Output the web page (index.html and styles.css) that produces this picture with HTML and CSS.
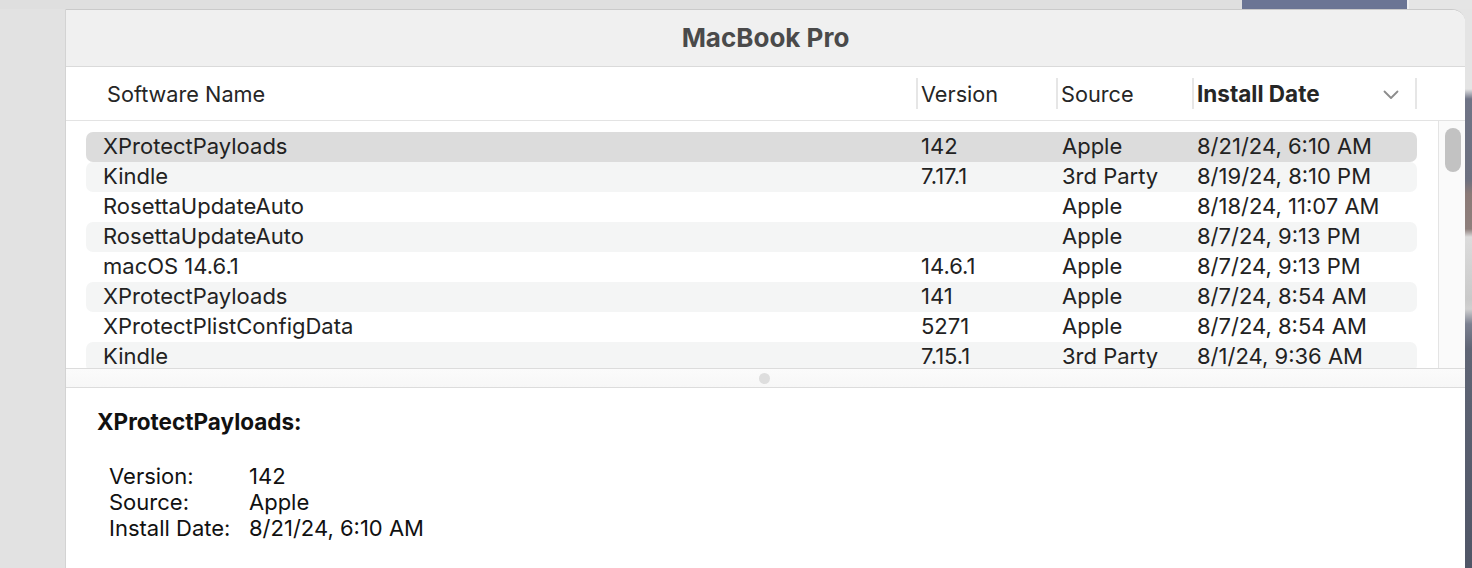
FILE: index.html
```html
<!DOCTYPE html>
<html>
<head>
<meta charset="utf-8">
<link rel="stylesheet" href="styles.css">
</head>
<body>
<div class="topstrip">
  <div class="ts-a"></div>
  <div class="ts-b"></div>
  <div class="ts-c"></div>
</div>
<div class="main">
  <div class="gutter"></div>
  <div class="window">
    <div class="titlebar">MacBook Pro</div>
    <div class="header">
      <div class="hcol hname">Software Name</div>
      <div class="hcol hsep">Version</div>
      <div class="hcol hsep">Source</div>
      <div class="hcol hsep hdate"><span class="bold">Install Date</span>
        <svg class="chev" width="16" height="10" viewBox="0 0 16 10"><polyline points="1.5,1.5 8,8 14.5,1.5" fill="none" stroke="#8c8c8c" stroke-width="1.8" stroke-linecap="round" stroke-linejoin="round"/></svg>
      </div>
      <div class="hcol hsep hlast"></div>
    </div>
    <div class="body">
      <div class="list">
        <div class="row sel"><span>XProtectPayloads</span><span>142</span><span>Apple</span><span>8/21/24, 6:10 AM</span></div>
        <div class="row alt"><span>Kindle</span><span>7.17.1</span><span>3rd Party</span><span>8/19/24, 8:10 PM</span></div>
        <div class="row"><span>RosettaUpdateAuto</span><span></span><span>Apple</span><span>8/18/24, 11:07 AM</span></div>
        <div class="row alt"><span>RosettaUpdateAuto</span><span></span><span>Apple</span><span>8/7/24, 9:13 PM</span></div>
        <div class="row"><span>macOS 14.6.1</span><span>14.6.1</span><span>Apple</span><span>8/7/24, 9:13 PM</span></div>
        <div class="row alt"><span>XProtectPayloads</span><span>141</span><span>Apple</span><span>8/7/24, 8:54 AM</span></div>
        <div class="row"><span>XProtectPlistConfigData</span><span>5271</span><span>Apple</span><span>8/7/24, 8:54 AM</span></div>
        <div class="row alt"><span>Kindle</span><span>7.15.1</span><span>3rd Party</span><span>8/1/24, 9:36 AM</span></div>
      </div>
      <div class="track"><div class="thumb"></div></div>
    </div>
    <div class="divider"><div class="dot"></div></div>
    <div class="detail">
      <div class="dtitle">XProtectPayloads:</div>
      <div class="dgrid">
        <span>Version:</span><span>142</span>
        <span>Source:</span><span>Apple</span>
        <span>Install Date:</span><span>8/21/24, 6:10 AM</span>
      </div>
    </div>
  </div>
  <div class="wall"></div>
</div>
</body>
</html>
```
FILE: styles.css
```css
html, body {
  margin: 0;
  padding: 0;
}
body {
  width: 1472px;
  height: 568px;
  overflow: hidden;
  background: #e2e2e2;
  font-family: "Inter", "Liberation Sans", sans-serif;
  color: #222;
  display: flex;
  flex-direction: column;
}
.topstrip {
  height: 9px;
  display: flex;
  flex: none;
}
.ts-a { width: 1242px; background: #dfdfdf; }
.ts-b { width: 165px; background: #6b7594; }
.ts-c { flex: 1; background: #e5e5e5; border-left: 2px solid #f0f0f0; }
.main {
  flex: 1;
  display: flex;
  background: #e4e4e4;
  min-height: 0;
}
.gutter {
  width: 65px;
  flex: none;
  background: #e2e2e2;
}
.window {
  width: 1399px;
  flex: none;
  border-left: 1px solid #d3d3d3;
  border-top: 1px solid #cacaca;
  border-top-right-radius: 13px;
  background: #fff;
  overflow: hidden;
  display: flex;
  flex-direction: column;
}
.wall {
  flex: 1;
  background: linear-gradient(to bottom, #e4e4e4 0px, #e4e4e4 80px, #6f7486 90px, #6c7080 170px, #8b7a77 185px, #8e7f7c 220px, #dcdcdc 228px, #c9c9c9 290px, #d0d0d0 300px, #7b8090 315px, #5f6575 340px, #4f5566 568px);
}
.titlebar {
  flex: none;
  background: #f0f0f0;
  border-bottom: 1px solid #dadada;
  display: flex;
  align-items: center;
  justify-content: center;
  font-weight: 700;
  font-size: 26px;
  color: #4a4a4a;
  padding-bottom: 2px;
  box-sizing: border-box;
  height: 57px;
}
.header {
  height: 54px;
  flex: none;
  box-sizing: border-box;
  border-bottom: 1px solid #e3e3e3;
  display: grid;
  grid-template-columns: 850px 140px 136px 223px 1fr;
  align-items: center;
  font-size: 21.7px;
  color: #262626;
}
.hcol {
  height: 31px;
  display: flex;
  align-items: center;
  box-sizing: border-box;
  white-space: nowrap;
}
.hname { padding-left: 41px; }
.hsep {
  border-left: 2px solid #e6e6e6;
  padding-left: 3px;
}
.hdate {
  justify-content: space-between;
  padding-right: 16px;
}
.bold { font-weight: 700; font-size: 22.5px; }
.chev { margin-top: 2px; }
.body {
  height: 247px;
  flex: none;
  display: flex;
  background: #fff;
}
.list {
  flex: 1;
  padding: 11px 21px 0 20px;
  overflow: hidden;
}
.row {
  height: 30px;
  border-radius: 7px;
  display: grid;
  grid-template-columns: 835px 141px 135px 1fr;
  align-items: center;
  font-size: 22px;
  line-height: 26px;
  padding-bottom: 3px;
  box-sizing: border-box;
  white-space: nowrap;
}
.row span:first-child { padding-left: 17px; }
.row.sel { background: #dcdcdc; }
.row.alt { background: #f4f5f5; }
.track {
  width: 27px;
  flex: none;
  border-left: 1px solid #e4e4e4;
  background: #fafafa;
  padding: 7px 0 0 6px;
  box-sizing: border-box;
}
.thumb {
  width: 16px;
  height: 44px;
  border-radius: 8px;
  background: #c2c2c2;
}
.divider {
  height: 20px;
  flex: none;
  box-sizing: border-box;
  border-top: 1px solid #dcdcdc;
  border-bottom: 1px solid #dcdcdc;
  background: linear-gradient(to bottom, #fbfbfb, #f7f7f7);
  display: flex;
  align-items: center;
  justify-content: center;
  padding-right: 3px;
}
.dot {
  width: 11px;
  height: 11px;
  border-radius: 50%;
  background: #dedede;
}
.detail {
  flex: 1;
  background: #fff;
  padding: 21px 0 0 31px;
  color: #111;
}
.dtitle {
  font-weight: 700;
  font-size: 22.5px;
  line-height: 26px;
}
.dgrid {
  margin-top: 28px;
  margin-left: 12px;
  display: grid;
  grid-template-columns: 140px auto;
  font-size: 22px;
  line-height: 26px;
  width: max-content;
}
```
